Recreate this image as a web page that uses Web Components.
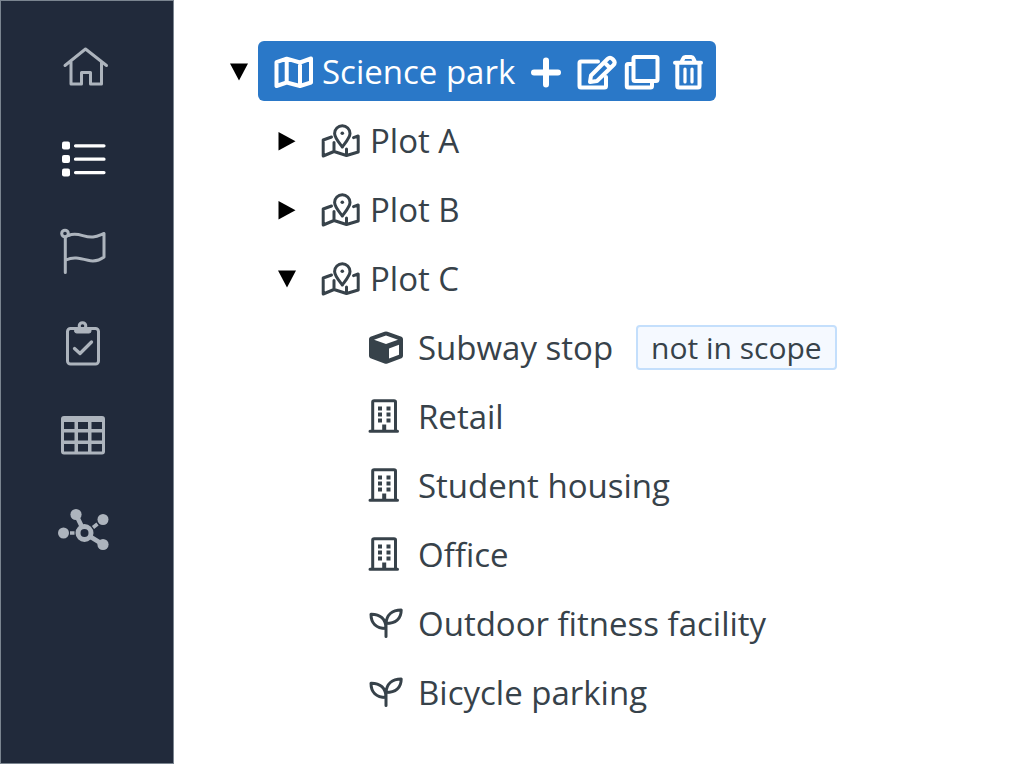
<!DOCTYPE html>
<html lang="en">
<head>
<meta charset="utf-8">
<meta name="viewport" content="width=device-width, initial-scale=1">
<title>Science park</title>
<style>
body {
  margin:0;
  font-family:"Open Sans","Noto Sans",sans-serif;
  font-size:33px;
  color:#37424a;
  background-color:#fff;
}
</style>
</head>
<body>
<app-shell>
  <side-nav slot="nav">
    <nav-item icon="home" label="Home"></nav-item>
    <nav-item icon="list" label="Structure" active></nav-item>
    <nav-item icon="flag" label="Milestones"></nav-item>
    <nav-item icon="clipboard" label="Tasks"></nav-item>
    <nav-item icon="table" label="Table"></nav-item>
    <nav-item icon="network" label="Relations"></nav-item>
  </side-nav>
  <tree-node icon="map" label="Science park" open selected>
    <icon-button slot="extra" icon="plus" label="Add"></icon-button>
    <icon-button slot="extra" icon="edit" label="Edit"></icon-button>
    <icon-button slot="extra" icon="copy" label="Duplicate"></icon-button>
    <icon-button slot="extra" icon="trash" label="Delete"></icon-button>
    <tree-node icon="plot" label="Plot A" expandable></tree-node>
    <tree-node icon="plot" label="Plot B" expandable></tree-node>
    <tree-node icon="plot" label="Plot C" open>
      <tree-node icon="cube" label="Subway stop">
        <scope-badge slot="extra">not in scope</scope-badge>
      </tree-node>
      <tree-node icon="building" label="Retail"></tree-node>
      <tree-node icon="building" label="Student housing"></tree-node>
      <tree-node icon="building" label="Office"></tree-node>
      <tree-node icon="plant" label="Outdoor fitness facility"></tree-node>
      <tree-node icon="plant" label="Bicycle parking"></tree-node>
    </tree-node>
  </tree-node>
</app-shell>

<script>
/* Icons: the nav set is drawn on a 60 grid, the tree set on a 40 grid */

const NAV_ICONS = {
  home: `<path d="M8 27.5L28.5 11 49.5 27.5M14 24v22h10.500V34.500h9V46H44.500V24"/>`,
  list: `<g fill="currentColor" stroke="none"><rect x="5" y="10.500" width="8" height="8" rx="2"/><rect x="5" y="24" width="8" height="8" rx="2"/><rect x="5" y="37.500" width="8" height="8" rx="2"/></g>
    <path stroke-width="3.200" d="M18.500 14.800H47M18.500 28.200H47M18.500 41.600H47"/>`,
  flag: `<circle cx="8" cy="9.500" r="3.300"/><path d="M8.300 13V48.500M11.500 11.500C21 7.500 27 14 36 13 41 12.500 44 10.500 47 9.500V33C43 36 38 38 31 36.300 22 34 16 32.500 9 36"/>`,
  clipboard: `<rect x="10.500" y="11.500" width="31" height="35.500" rx="3" stroke-width="3"/><circle cx="25.500" cy="9" r="3.300"/>
    <path fill="currentColor" stroke-width="1" d="M17.500 11.500H34V14Q34 16 32 16H19.500Q17.500 16 17.500 14Z"/><path stroke-width="3.300" d="M17.500 31.500L23 36.500 34.500 25"/>`,
  table: `<path fill="currentColor" stroke="none" fill-rule="evenodd" d="M7 6H45Q48 6 48 9V41.500Q48 44.500 45 44.500H7Q4 44.500 4 41.500V9Q4 6 7 6ZM7 12V19H17.500V12ZM21 12V19H31V12ZM34.500 12V19H45V12ZM7 22.500V30.500H17.500V22.500ZM21 22.500V30.500H31V22.500ZM34.500 22.500V30.500H45V22.500ZM7 34V41.500H17.500V34ZM21 34V41.500H31V34ZM34.500 34V41.500H45V34Z"/>`,
  network: `<g fill="currentColor" stroke="none"><circle cx="6.500" cy="30" r="5.500"/><circle cx="19" cy="11.500" r="5.600"/><circle cx="46" cy="16.500" r="5.500"/><circle cx="46" cy="41.500" r="5.600"/></g>
    <circle cx="27.500" cy="30" r="6.500" stroke-width="5"/><path stroke-width="4.600" stroke-linecap="butt" d="M19 11.500L25 24M33 33.500L46 41.500"/><path stroke-width="3.600" stroke-linecap="butt" d="M13 30H17.500M36 24.500L40.500 21"/>`
};

const TREE_ICONS = {
  down: `<path fill="currentColor" stroke="none" d="M11 12.500H29L20 29.500Z"/>`,
  right: `<path fill="currentColor" stroke="none" d="M11.500 12V30.500L28.500 21.200Z"/>`,
  map: `<path d="M2.500 11.200L12.700 7.700 26 11.500 37 7.500V31.500L26 35 12.700 31.500 2.500 35ZM12.700 7.700V31.500M26 11.500V35"/>`,
  plus: `<path stroke-width="6" d="M4 21.500H28M16 9.500V33.500"/>`,
  edit: `<path d="M22 10.500H5Q3.500 10.500 3.500 12V35Q3.500 36.500 5 36.500H28.500Q30 36.500 30 35V26"/><path d="M14 31L15 24.500 31.500 8Q34 5.500 36.500 8L37.500 9Q40 11.500 37.500 14L21 30ZM28.500 11.500L34 17"/>`,
  copy: `<rect x="11.500" y="6" width="24" height="24" rx="1.500"/><path d="M10.500 13H6Q4.800 13 4.800 14.500V35Q4.800 36.500 6 36.500H28.500Q30 36.500 30 35V30.500"/>`,
  trash: `<path d="M7 11.800H33M9.300 12V35Q9.300 36.500 11 36.500H30Q31.500 36.500 31.500 35V12M13.500 11L15.300 7.300Q15.800 6 17.300 6H23.300Q24.800 6 25.300 7.300L27 11"/><path stroke-width="3.200" d="M17 18V31M24 18V31"/>`,
  plot: `<path d="M9.500 17L1.200 20V36L12 31.500 24.500 35.500 36.200 32V16L31.500 17.600M12 22.500V31M24.500 29V35"/><path d="M20.300 27C16.500 22 12.600 17.500 12.600 13.500A7.700 7.700 0 0 1 28 13.500C28 17.500 24 22 20.300 27Z"/><circle cx="20.300" cy="13.200" r="1.800" fill="currentColor" stroke="none"/>`,
  cube: `<path fill="currentColor" stroke="none" fill-rule="evenodd" d="M14.500 4.800Q16 4.200 17.500 4.800L31.500 9.800Q33 10.500 33 12V29Q33 30.500 31.500 31.200L17.500 36.400Q16 37 14.500 36.400L.5 31.200Q-1 30.500-1 29V12Q-1 10.500.5 9.800ZM16 8.500L4 12.700 16 17 28 12.700ZM19 21.500V31.500L29 27.700V17.700Z"/>`,
  building: `<path d="M2.700 35V6Q2.700 4.800 4.200 4.800H24Q25.500 4.800 25.500 6V35M0 35.300H27.500"/><path stroke-width="4" stroke-linecap="butt" d="M8 12.500H12M8 18.500H12M8 24.500H12M16.500 12.500H20.500M16.500 18.500H20.500M16.500 24.500H20.500M14.200 28.500V35"/>`,
  plant: `<path d="M31.200 7C22 7 16.500 12 16 20.500 25.500 20.500 31.200 16 31.200 7ZM1 11.200C10 11 16 16 16 25.500 6 25.500 1 20 1 11.200ZM16 20V33.500"/>`
};

function drawIcon(name, size) {
  const shapes = size==60 ? NAV_ICONS[name] : TREE_ICONS[name];
  return `<svg viewBox="0 0 ${size} ${size}" width="${size}" height="${size}" overflow="visible" fill="none" stroke="currentColor" stroke-linecap="round" stroke-linejoin="round" aria-hidden="true">${shapes}</svg>`;
}

/* Page frame */

class AppShell extends HTMLElement {
  constructor() {
    super();
    this.attachShadow({mode: 'open'}).innerHTML = `
<style>
:host {
  display:flex;
  min-height:100vh;
}
main {
  flex:1;
  min-width:0;
  padding:41px 24px 32px 45px;
}
</style>
<slot name="nav"></slot>
<main><slot></slot></main>`;
  }
}

class SideNav extends HTMLElement {
  constructor() {
    super();
    this.attachShadow({mode: 'open'}).innerHTML = `
<style>
:host {
  display:block;
  flex:none;
  border:1px solid #7b8590;
  background-color:#212a3b;
}
nav {
  display:flex;
  flex-direction:column;
  gap:33px;
  padding:37px 56px;
}
</style>
<nav aria-label="Main"><slot></slot></nav>`;
  }
}

class NavItem extends HTMLElement {
  constructor() {
    super();
    const icon = this.getAttribute('icon');
    this.attachShadow({mode: 'open'}).innerHTML = `
<style>
:host {
  display:block;
  color:#adb4bd;
}
:host([active]) {
  color:#fff;
}
a {
  display:block;
  color:inherit;
}
svg {
  display:block;
  stroke-width:3px;
}
</style>
<a href="#${icon}" aria-label="${this.getAttribute('label')}">${drawIcon(icon,60)}</a>`;
  }
}

/* Tree */

class IconButton extends HTMLElement {
  constructor() {
    super();
    this.attachShadow({mode: 'open'}).innerHTML = `
<style>
:host {
  display:block;
}
button {
  display:block;
  padding:0;
  border:0;
  color:inherit;
  background:none;
  cursor:pointer;
}
svg {
  display:block;
  stroke-width:4px;
}
</style>
<button type="button" aria-label="${this.getAttribute('label')}">${drawIcon(this.getAttribute('icon'),40)}</button>`;
  }
}

class ScopeBadge extends HTMLElement {
  constructor() {
    super();
    this.attachShadow({mode: 'open'}).innerHTML = `
<style>
:host {
  display:block;
  margin-left:8px;
  padding:0 13px;
  border:2px solid #c4dffc;
  border-radius:4px;
  font-size:30px;
  line-height:41px;
  background-color:#f5f9ff;
}
</style>
<slot></slot>`;
  }
}

class TreeNode extends HTMLElement {
  constructor() {
    super();
    const shadow = this.attachShadow({mode: 'open'});
    shadow.innerHTML = `
<style>
:host {
  display:block;
}
.line {
  display:flex;
  align-items:center;
}
.toggle {
  flex:none;
  width:39px;
  height:40px;
  padding:0;
  border:0;
  color:#000;
  background:none;
  cursor:pointer;
}
.toggle svg {
  display:block;
}
.row {
  display:flex;
  align-items:center;
  gap:8px;
  height:60px;
  padding:0 8px 0 16px;
  border-radius:6px;
  white-space:nowrap;
}
.row > svg {
  flex:none;
  stroke-width:3px;
}
:host([selected]) .row {
  color:#fff;
  background-color:#2a78c8;
}
:host([selected]) .row > svg {
  stroke-width:4px;
}
.extra {
  display:flex;
  align-items:center;
  gap:6px;
  margin-left:7px;
}
.children {
  display:grid;
  gap:9px;
  margin:9px 0 0 48px;
}
.children[hidden] {
  display:none;
}
</style>
<div class="line">
  <button class="toggle" type="button"></button>
  <div class="row">
    ${drawIcon(this.getAttribute('icon'),40)}
    <span>${this.getAttribute('label')}</span>
    <div class="extra"><slot name="extra"></slot></div>
  </div>
</div>
<div class="children"><slot></slot></div>`;

    this.toggle = shadow.querySelector(".toggle");
    this.children_ui = shadow.querySelector(".children");
    this.toggle.addEventListener("click",() => {
      this.toggleAttribute('open');
      this.setUI();
    });
    this.setUI();
  }

  setUI() {
    const open = this.hasAttribute('open');
    const branch = open || this.hasAttribute('expandable') || this.querySelector("tree-node");
    this.toggle.style.visibility = branch ? 'visible' : 'hidden';
    this.toggle.innerHTML = drawIcon(open ? 'down' : 'right',40);
    this.toggle.setAttribute('aria-label',(open ? 'Collapse ' : 'Expand ') + this.getAttribute('label'));
    this.toggle.setAttribute('aria-expanded',open);
    this.children_ui.hidden = !open;
  }
}

customElements.define('app-shell',AppShell);
customElements.define('side-nav',SideNav);
customElements.define('nav-item',NavItem);
customElements.define('icon-button',IconButton);
customElements.define('scope-badge',ScopeBadge);
customElements.define('tree-node',TreeNode);
</script>
</body>
</html>
